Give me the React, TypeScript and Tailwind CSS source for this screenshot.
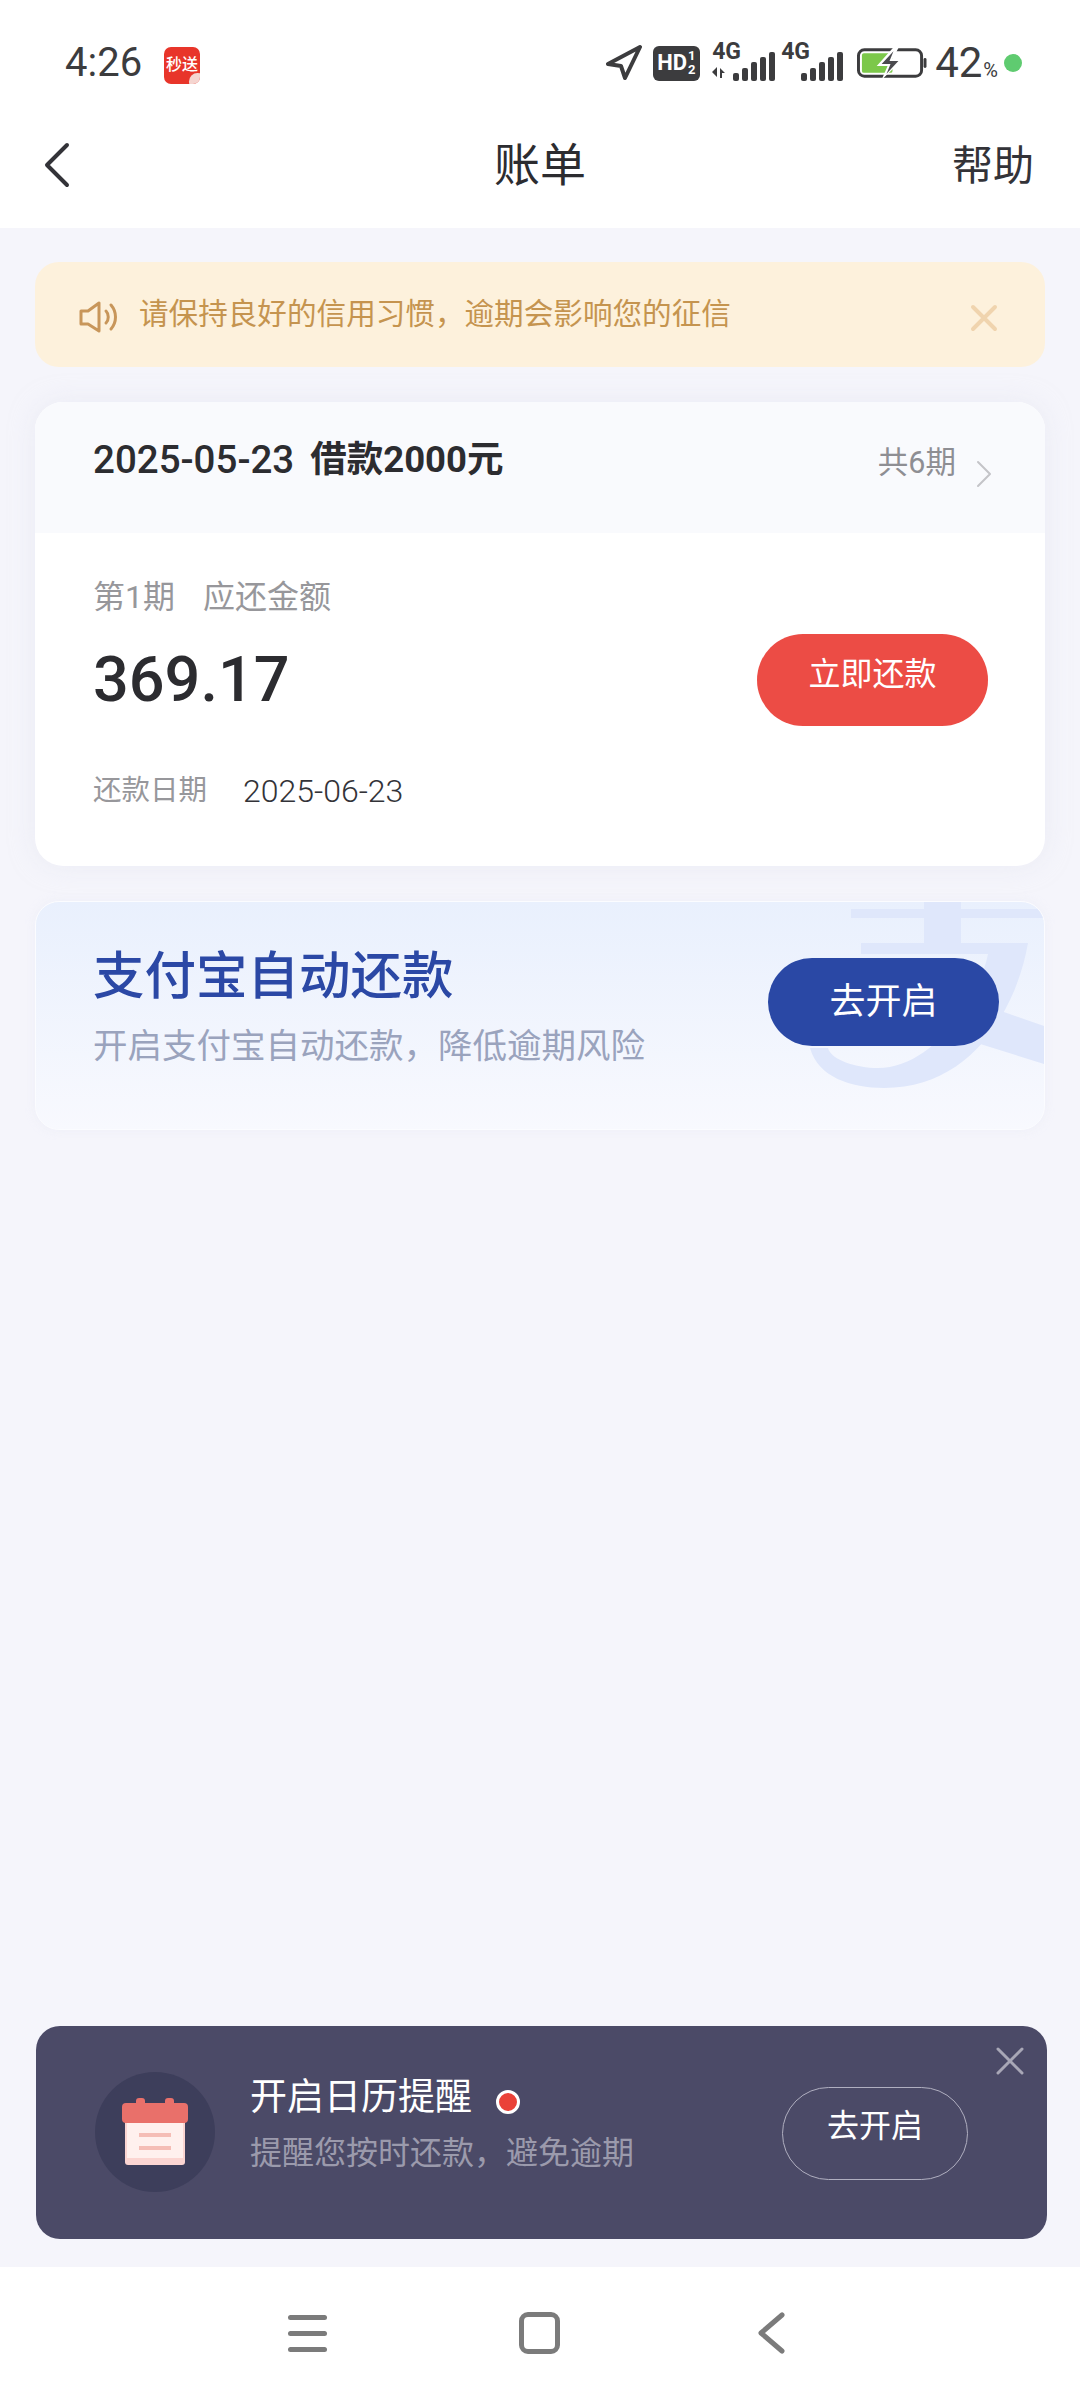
export default function App() {
  return (
    <div className="flex flex-col w-[1080px] h-[2400px] bg-[#f5f5fb] font-['Roboto','Noto_Sans_CJK_SC',sans-serif] overflow-hidden">
      {/* Header */}
      <div className="bg-white h-[228px] shrink-0">
        <div className="h-[80px] flex items-center pt-[46px] pl-[65px] pr-[58px] text-[#3c3c3e]">
          <span className="text-[40px] leading-[40px] w-[93px] font-normal">4:26</span>
          <div className="relative ml-[6px] w-[36px] h-[37px] rounded-[7px] bg-[#e8352a] overflow-hidden flex items-center justify-center text-white text-[16px] leading-none font-medium mt-[4px]">
            秒送
            <div className="absolute -right-[6px] -bottom-[6px] w-[17px] h-[17px] rounded-full bg-[#f5d5d0]" />
          </div>
          <div className="ml-auto flex items-center h-[40px]">
            <svg width="38" height="36" viewBox="0 0 38 36" fill="none" stroke="#3c3c3e" strokeWidth="4" strokeLinejoin="round">
              <path d="M35 2 L3 19 L16 21 L20 33 Z" />
            </svg>
            <div className="ml-[10px] w-[47px] h-[35px] rounded-[6px] bg-[#3c3c3e] text-white flex items-center pl-[4px]">
              <span className="text-[22px] leading-none font-bold">HD</span>
              <span className="flex flex-col text-[13px] leading-[14px] font-bold ml-[1px]"><span>1</span><span>2</span></span>
            </div>
            <Signal dual className="ml-[12px]" />
            <Signal className="ml-[23px]" />
            <svg className="ml-[14px]" width="70" height="32" viewBox="0 0 71 32" fill="none">
              <rect x="1.5" y="2.5" width="64" height="27" rx="6" stroke="#3c3c3e" strokeWidth="3" />
              <rect x="5" y="6" width="31" height="20" rx="2" fill="#7cc84a" />
              <rect x="67.5" y="11" width="3" height="10" rx="1.5" fill="#3c3c3e" />
              <path d="M38 -1 L20 19 H31 L25 33 L47 12 H36 L43 -1 Z" fill="#ffffff" />
              <path d="M37 4 L25 17 H34 L30 27 L42 14 H33 Z" fill="#4a4a4e" />
            </svg>
            <span className="ml-[8px] text-[42px] leading-[40px]">42</span>
            <span className="text-[20px] leading-none mt-[14px] ml-[1px]">%</span>
            <div className="ml-[6px] w-[18px] h-[18px] rounded-full bg-[#5fcb70]" />
          </div>
        </div>
        <div className="h-[148px] relative flex items-center justify-center pt-[22px]">
          <svg className="absolute left-[43px] top-[62px]" width="28" height="46" viewBox="0 0 28 46" fill="none" stroke="#333338" strokeWidth="4" strokeLinecap="round" strokeLinejoin="round">
            <path d="M24 3 L4 23 L24 43" />
          </svg>
          <span className="text-[46px] leading-[60px] text-[#2c2c30]">账单</span>
          <span className="absolute right-[46px] top-[56px] text-[41px] leading-[60px] text-[#333338]">帮助</span>
        </div>
      </div>

      {/* Main */}
      <div className="flex-1 flex flex-col px-[35px] pt-[34px] pb-[28px]">
        <div className="h-[105px] rounded-[24px] bg-[#fdf1dc] flex items-start pl-[44px] pr-[47px] pt-[37px]">
          <svg className="mt-[1px]" width="40" height="34" viewBox="0 0 40 34" fill="none" stroke="#c8965a" strokeWidth="3" strokeLinejoin="round" strokeLinecap="round">
            <path d="M2 11 H9 L20 3 V31 L9 24 H2 Z" />
            <path d="M27 11 C30 14 30 20 27 23" />
            <path d="M32 5 C38 12 38 22 32 29" />
          </svg>
          <span className="ml-[20px] text-[29.6px] leading-[30px] text-[#c5944f] -mt-[2px] pt-[2px]">请保持良好的信用习惯，逾期会影响您的征信</span>
          <svg className="ml-auto mt-[5px]" width="28" height="28" viewBox="0 0 28 28" fill="none" stroke="#f0d4ae" strokeWidth="4" strokeLinecap="round">
            <path d="M3 3 L25 25 M25 3 L3 25" />
          </svg>
        </div>

        <div className="mt-[35px] rounded-[28px] bg-white overflow-hidden shadow-[0_0_24px_rgba(225,228,240,0.5)]">
          <div className="h-[131px] bg-[#f9fafd] flex items-start pl-[58px] pr-[52px] pt-[38px]">
            <span className="text-[38.5px] leading-[40px] font-medium text-[#2c2c30]">2025-05-23</span>
            <span className="ml-[16px] text-[36.5px] leading-[40px] font-bold text-[#2c2c30]">借款2000元</span>
            <span className="ml-auto mt-[3px] text-[30.5px] leading-[40px] text-[#8e8e93]">共6期</span>
            <svg className="ml-[19px] mt-[20px]" width="18" height="28" viewBox="0 0 18 28" fill="none" stroke="#c4c4c8" strokeWidth="2" strokeLinecap="round" strokeLinejoin="round">
              <path d="M3 2 L15 14 L3 26" />
            </svg>
          </div>
          <div className="pl-[58px] pr-[57px] pt-[44px] pb-[55px]">
            <div className="text-[32px] leading-[40px] text-[#97979b] flex">
              <span className="w-[110px]">第1期</span>
              <span>应还金额</span>
            </div>
            <div className="mt-[17px] h-[92px] flex items-center justify-between">
              <span className="text-[63px] leading-[70px] font-medium text-[#2c2c30]">369.17</span>
              <div className="w-[231px] h-[92px] rounded-full bg-[#ec4c45] flex items-start justify-center pt-[20px]">
                <span className="text-[32px] leading-[40px] text-white">立即还款</span>
              </div>
            </div>
            <div className="mt-[45px] flex leading-[40px]">
              <span className="text-[28.5px] text-[#97979b]">还款日期</span>
              <span className="ml-[36px] text-[32px] text-[#333338] font-light">2025-06-23</span>
            </div>
          </div>
        </div>

        <div className="relative mt-[35px] h-[229px] rounded-[24px] overflow-hidden bg-gradient-to-b from-[#e9f0fd] to-[#f8f9fe] border border-[#fbfcff] flex items-start justify-between pl-[57px] pr-[45px] shadow-[0_0_10px_rgba(235,237,246,0.7)]">
          <svg className="absolute right-0 top-0" width="238" height="229" viewBox="0 0 238 229" fill="#dfe7fb">
            <rect x="45" y="7" width="193" height="9" />
            <rect x="118" y="0" width="37" height="42" />
            <path d="M55 41 H222 C212 100 170 186 78 186 C45 186 12 175 4 146 H22 C25 158 50 166 72 166 C130 166 175 90 182 52 H55 Z" />
            <path d="M195 109 L238 124 V162 L155 136 Z" />
          </svg>
          <div className="relative pt-[45px]">
            <div className="text-[51.5px] leading-[60px] font-medium text-[#2b48a5]">支付宝自动还款</div>
            <div className="mt-[14px] text-[34.5px] leading-[50px] text-[#9aa3bd]">开启支付宝自动还款，降低逾期风险</div>
          </div>
          <div className="relative mt-[56px] w-[231px] h-[88px] rounded-full bg-[#2a48a5] flex items-center justify-center">
            <span className="text-[36px] leading-[40px] text-white">去开启</span>
          </div>
        </div>

        <div className="relative mt-auto ml-[1px] w-[1011px] h-[213px] rounded-[24px] bg-[#4b4a67] flex items-start pl-[59px]">
          <div className="mt-[46px] w-[120px] h-[120px] rounded-full bg-[#3d3e5b] flex items-center justify-center">
            <svg width="66" height="68" viewBox="0 0 66 68" fill="none">
              <rect x="14" y="0" width="9" height="8" rx="3" fill="#e9706a" />
              <rect x="43" y="0" width="9" height="8" rx="3" fill="#e9706a" />
              <rect x="3" y="19" width="60" height="48" rx="3" fill="#fbd5d2" />
              <rect x="5" y="19" width="56" height="41" fill="#fff0ee" />
              <rect x="0" y="5" width="66" height="20" rx="4" fill="#e9706a" />
              <rect x="17" y="35" width="32" height="4" fill="#f5bdb6" />
              <rect x="17" y="48" width="32" height="4" fill="#f5bdb6" />
            </svg>
          </div>
          <div className="ml-[35px] pt-[47px]">
            <div className="flex items-center">
              <span className="text-[37px] leading-[50px] text-white">开启日历提醒</span>
              <div className="ml-[24px] mt-[7px] w-[24px] h-[24px] rounded-full bg-[#ea4138] border-[3px] border-white" />
            </div>
            <div className="mt-[7px] text-[32px] leading-[46px] text-[#9b9aac]">提醒您按时还款，避免逾期</div>
          </div>
          <div className="ml-auto mr-[79px] mt-[61px] w-[186px] h-[93px] rounded-full border border-[#b0afc0] flex items-start justify-center pt-[18px]">
            <span className="text-[32px] leading-[40px] text-white">去开启</span>
          </div>
          <svg className="absolute right-[23px] top-[21px]" width="28" height="28" viewBox="0 0 28 28" fill="none" stroke="#a8a7b6" strokeWidth="3" strokeLinecap="round">
            <path d="M2 2 L26 26 M26 2 L2 26" />
          </svg>
        </div>
      </div>

      {/* Bottom nav */}
      <div className="h-[133px] shrink-0 bg-white relative flex items-start pt-[45px] pl-[288px]">
        <div className="w-[39px] flex flex-col gap-[11px] pt-[3px]">
          <div className="h-[5px] rounded-full bg-[#7b7b7b]" />
          <div className="h-[5px] rounded-full bg-[#7b7b7b]" />
          <div className="h-[5px] rounded-full bg-[#7b7b7b]" />
        </div>
        <div className="ml-[192px] w-[41px] h-[42px] rounded-[9px] border-[5px] border-[#7b7b7b]" />
        <svg className="ml-[197px]" width="28" height="42" viewBox="0 0 28 42" fill="none" stroke="#7b7b7b" strokeWidth="5" strokeLinecap="round" strokeLinejoin="round">
          <path d="M25 3 L4 21 L25 39" />
        </svg>
      </div>
    </div>
  );
}

function Signal({ dual, className }: { dual?: boolean; className?: string }) {
  const heights = [8, 13, 19, 24, 29];
  return (
    <div className={`relative h-[36px] ${dual ? "w-[63px]" : "w-[45px]"} ${className ?? ""}`}>
      <span className={`absolute ${dual ? "left-0" : "-left-[17px]"} -top-[5px] text-[23px] leading-[23px] font-bold text-[#3c3c3e]`}>4G</span>
      {dual && (
        <svg className="absolute left-0 bottom-[2px]" width="16" height="13" viewBox="0 0 16 13" fill="#3c3c3e">
          <path d="M5 1 V11 L0 6 Z M8 12 V2 L13 7 H10 V12 Z" />
        </svg>
      )}
      <div className="absolute right-0 bottom-0 flex items-end gap-[3px]">
        {heights.map((h, i) => (
          <div key={h} className={`w-[6px] rounded-[2px] bg-[#3c3c3e] ${dual && i === 0 ? "" : ""}`} style={{ height: h }} />
        ))}
      </div>
    </div>
  );
}
